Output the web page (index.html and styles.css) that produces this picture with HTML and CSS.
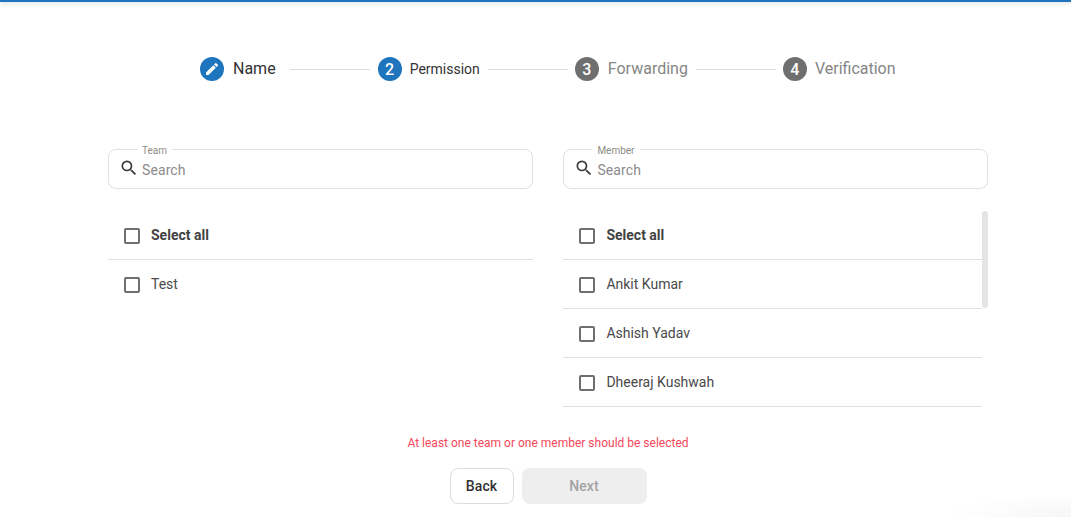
FILE: index.html
```html
<!DOCTYPE html>
<html lang="en">
<head>
<meta charset="utf-8">
<title>Permission</title>
<link rel="stylesheet" href="styles.css">
</head>
<body>
<div class="topbar"></div>
<main class="page">
  <nav class="stepper">
    <div class="step">
      <span class="dot active"><svg class="pencil" viewBox="0 0 24 24"><path d="M3 17.25V21h3.75L17.81 9.94l-3.75-3.75L3 17.25zM20.71 7.04a1 1 0 0 0 0-1.41l-2.34-2.34a1 1 0 0 0-1.41 0l-1.83 1.83 3.75 3.75 1.83-1.83z"/></svg></span>
      <span class="label">Name</span>
    </div>
    <span class="line line-a"></span>
    <div class="step">
      <span class="dot active">2</span>
      <span class="label current">Permission</span>
    </div>
    <span class="line line-b"></span>
    <div class="step">
      <span class="dot">3</span>
      <span class="label muted">Forwarding</span>
    </div>
    <span class="line line-c"></span>
    <div class="step">
      <span class="dot">4</span>
      <span class="label muted last">Verification</span>
    </div>
  </nav>

  <section class="columns">
    <div class="column">
      <div class="search">
        <span class="legend">Team</span>
        <svg class="search-icon" viewBox="0 0 24 24"><path d="M15.5 14h-.79l-.28-.27A6.47 6.47 0 0 0 16 9.5 6.5 6.5 0 1 0 9.5 16c1.61 0 3.09-.59 4.23-1.57l.27.28v.79l5 4.99L20.49 19l-4.99-5zm-6 0C7.01 14 5 11.99 5 9.5S7.01 5 9.5 5 14 7.01 14 9.5 11.99 14 9.5 14z"/></svg>
        <span class="placeholder">Search</span>
      </div>
      <div class="list">
        <ul class="rows">
          <li class="row head"><span class="box"></span>Select all</li>
          <li class="row plain"><span class="box"></span>Test</li>
        </ul>
      </div>
    </div>
    <div class="column">
      <div class="search">
        <span class="legend">Member</span>
        <svg class="search-icon" viewBox="0 0 24 24"><path d="M15.5 14h-.79l-.28-.27A6.47 6.47 0 0 0 16 9.5 6.5 6.5 0 1 0 9.5 16c1.61 0 3.09-.59 4.23-1.57l.27.28v.79l5 4.99L20.49 19l-4.99-5zm-6 0C7.01 14 5 11.99 5 9.5S7.01 5 9.5 5 14 7.01 14 9.5 11.99 14 9.5 14z"/></svg>
        <span class="placeholder">Search</span>
      </div>
      <div class="list scrolling">
        <ul class="rows">
          <li class="row head"><span class="box"></span>Select all</li>
          <li class="row"><span class="box"></span>Ankit Kumar</li>
          <li class="row"><span class="box"></span>Ashish Yadav</li>
          <li class="row"><span class="box"></span>Dheeraj Kushwah</li>
        </ul>
        <div class="track"><div class="thumb"></div></div>
      </div>
    </div>
  </section>

  <p class="error">At least one team or one member should be selected</p>
  <div class="actions">
    <button class="btn back" type="button">Back</button>
    <button class="btn next" type="button" disabled>Next</button>
  </div>
</main>
<div class="corner-glow"></div>
</body>
</html>
```
FILE: styles.css
```css
* { box-sizing: border-box; }
html, body { margin: 0; height: 517px; overflow: hidden; background: #fff; }
body { font-family: Roboto, "Liberation Sans", sans-serif; color: #333; position: relative; }

.topbar { height: 2px; background: #1e75bd; box-shadow: 0 1px 4px rgba(0,0,0,.2); }

.page { padding: 55px 83px 0 108px; width: 1071px; }

.stepper { display: flex; align-items: center; height: 24px; padding-left: 92px; }
.step { display: flex; align-items: center; gap: 9px; flex: none; }
.dot { width: 24px; height: 24px; border-radius: 50%; background: #6f6f6f; color: #fff; font-size: 16px; font-weight: 500; display: flex; align-items: center; justify-content: center; flex: none; }
.dot.active { background: #1e75bd; }
.pencil { width: 16px; height: 16px; fill: #fff; }
.label { font-size: 16px; line-height: 24px; color: #333; }
.label.current { font-size: 14px; margin-left: -1px; }
.label.muted { color: #858585; }
.label.last { margin-left: -1px; }
.line { height: 1px; width: 80px; background: #dcdcdc; flex: none; }
.line-a { margin: 0 8px 0 14px; }
.line-b { margin: 0 7px 0 8px; }
.line-c { margin: 0 7px 0 8px; }

.columns { display: flex; gap: 30.4px; margin-top: 68px; }
.column { width: 425px; flex: none; }
.column + .column { width: 424.6px; }

.search { position: relative; height: 40px; border: 1px solid #e0e0e0; border-radius: 8px; display: flex; align-items: center; padding-left: 10px; }
.legend { position: absolute; top: -5px; left: 28px; padding: 0 5px; background: #fff; font-size: 10px; line-height: 12px; color: #8d8d84; }
.search-icon { width: 20px; height: 20px; fill: #3a3a3a; flex: none; margin-top: -2px; }
.placeholder { margin-left: 3px; margin-top: 2px; font-size: 14px; line-height: 20px; color: #8c8c8c; letter-spacing: .1px; }

.list { margin-top: 22px; display: flex; height: 196px; }
.rows { list-style: none; margin: 0; padding: 0; flex: 1; }
.row { height: 49px; display: flex; align-items: center; gap: 11px; padding-left: 16px; font-size: 14px; color: #4a4a4a; border-bottom: 1px solid #e0e0e0; }
.row.plain { border-bottom-color: transparent; }
.row.head { font-weight: 700; color: #424242; }
.box { width: 16px; height: 16px; margin-top: 2px; border: 2px solid #6f6f6f; border-radius: 2px; flex: none; }

.track { width: 6px; flex: none; }
.thumb { height: 97px; background: #e4e4e4; border-radius: 3px; }

.error { margin: 29px 0 0; width: 880px; text-align: center; font-size: 12px; line-height: 14px; color: #f4475a; }

.actions { display: flex; justify-content: center; gap: 8px; margin-top: 18px; width: 880px; }
.btn { font-family: inherit; font-size: 14px; font-weight: 500; height: 36px; border-radius: 8px; padding: 0; letter-spacing: .1px; }
.back { width: 64px; background: #fff; border: 1px solid #dcdcdc; color: #333; }
.next { width: 125px; background: #eee; border: 0; color: #a3a3a3; }

.corner-glow { position: absolute; right: 0; bottom: 0; width: 130px; height: 24px; background: radial-gradient(ellipse at 100% 100%, rgba(0,0,0,.035), rgba(0,0,0,0) 70%); pointer-events: none; }
```
